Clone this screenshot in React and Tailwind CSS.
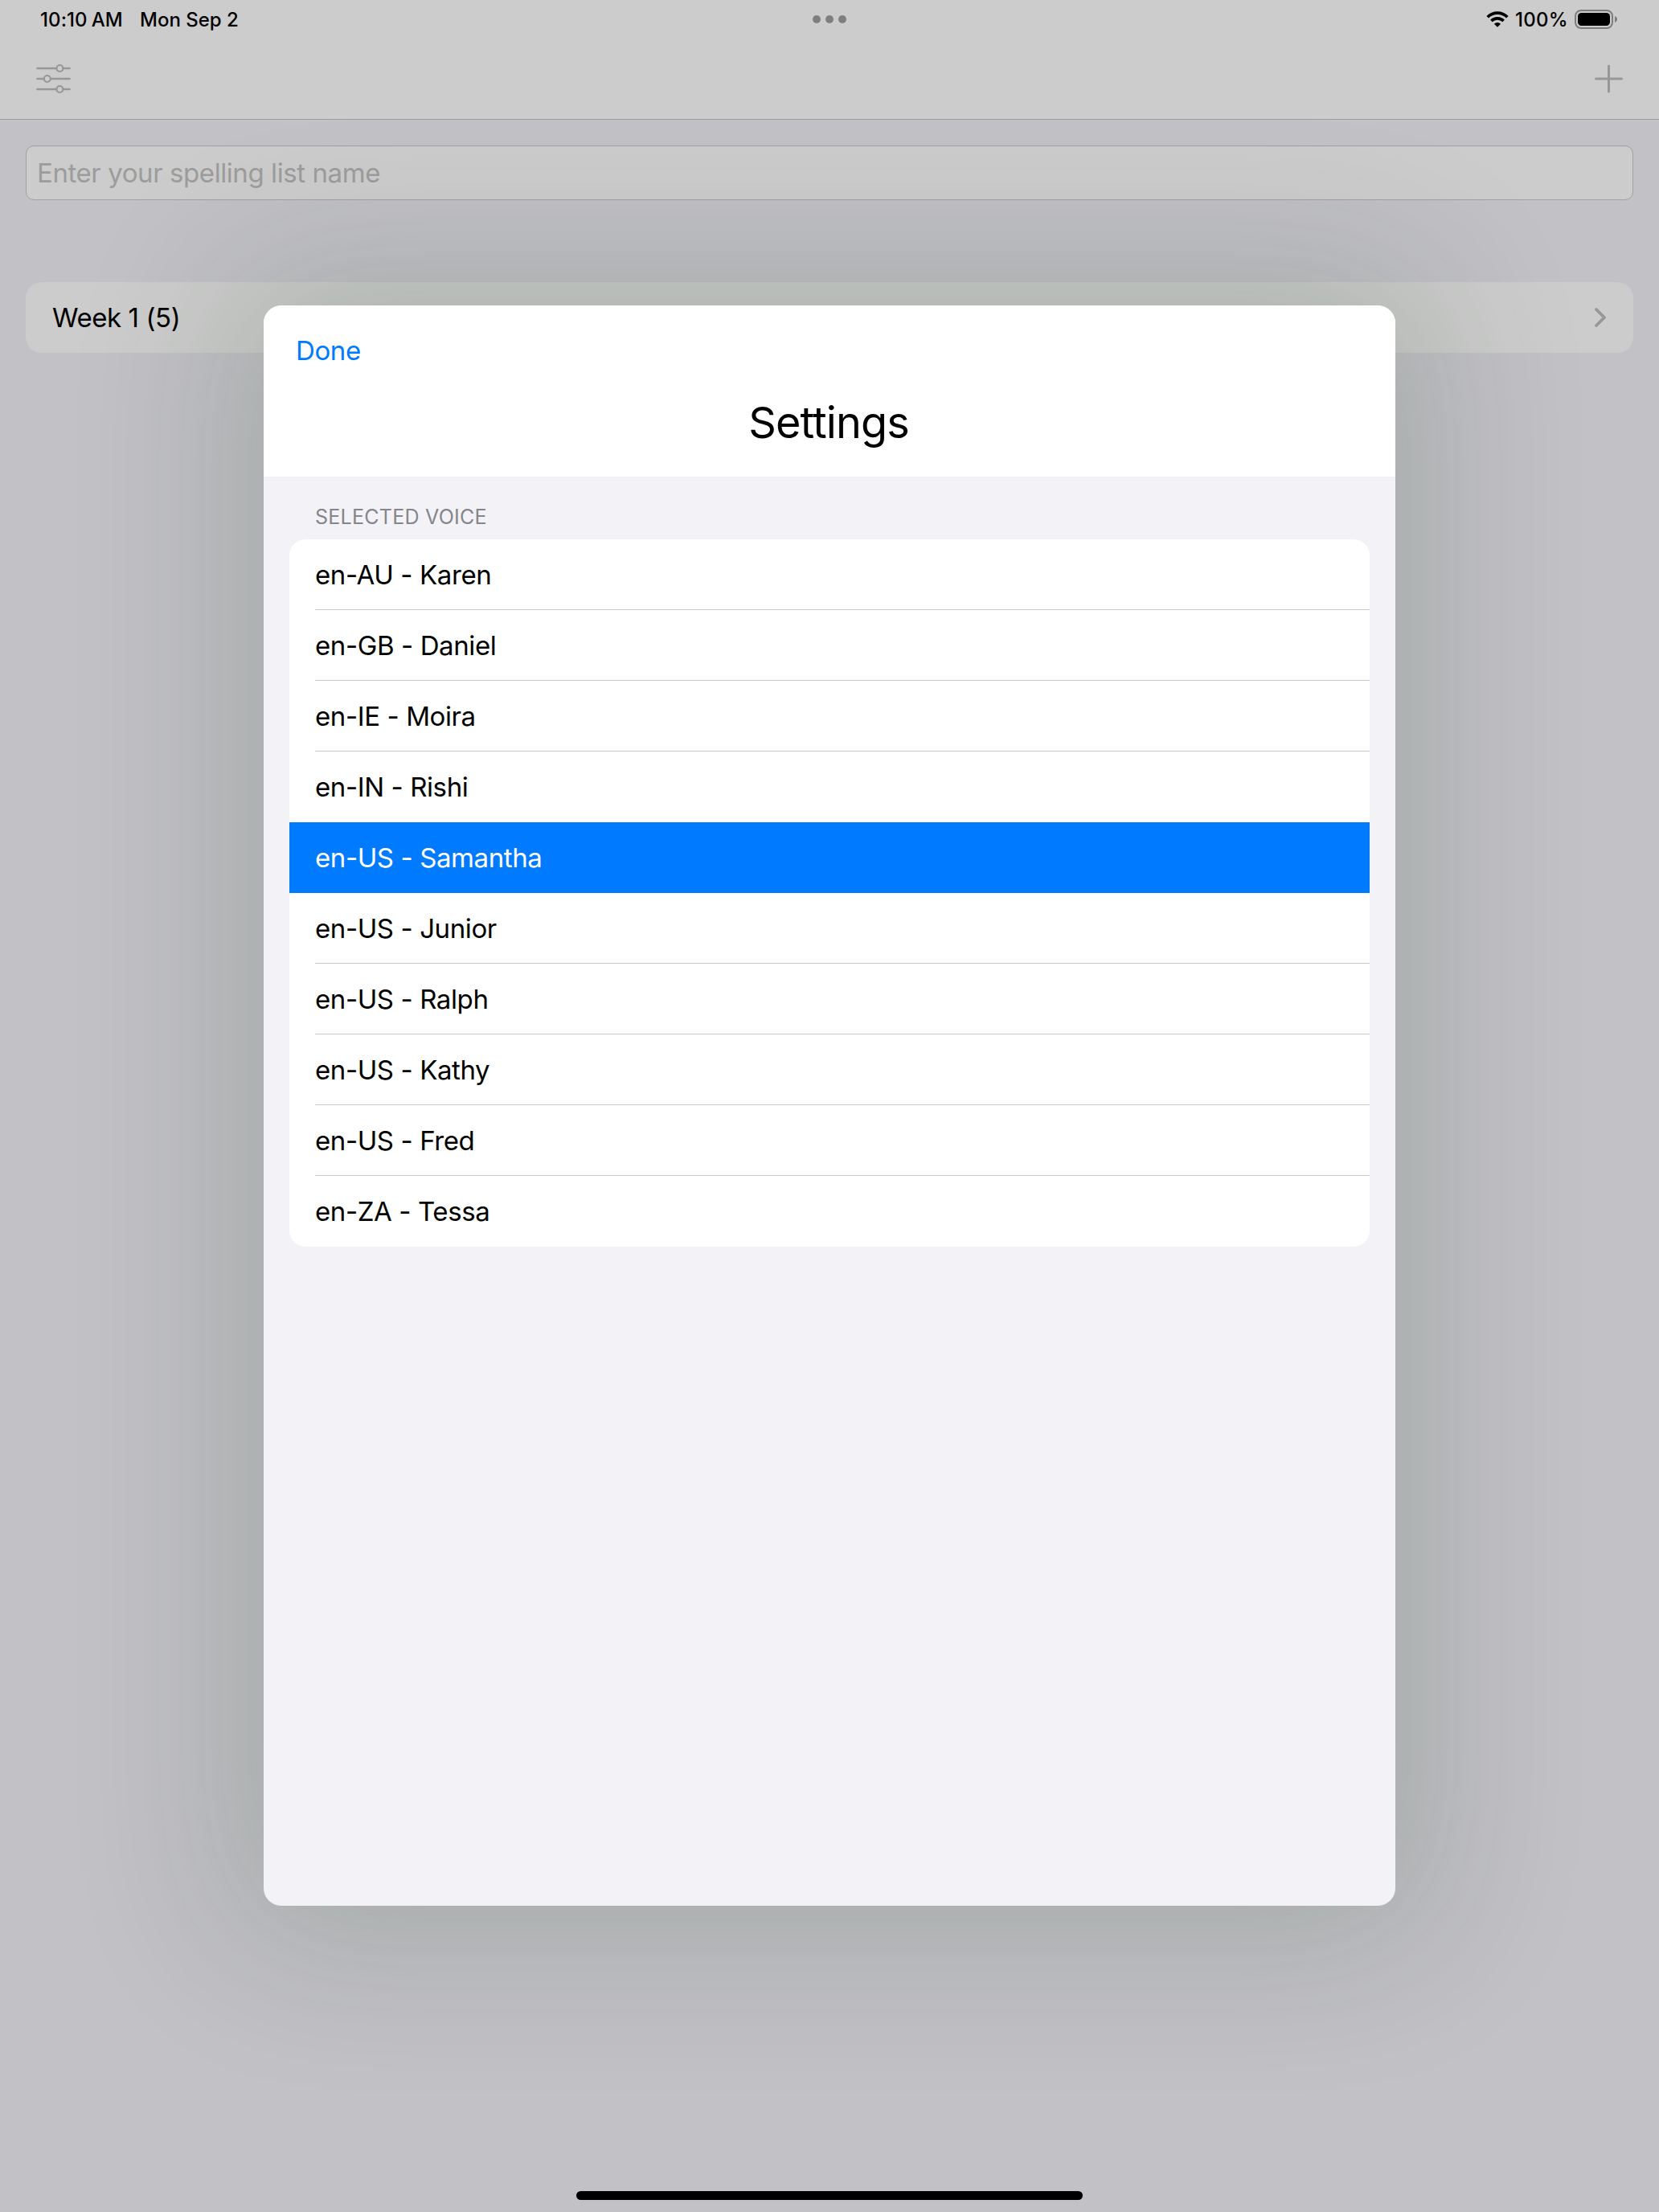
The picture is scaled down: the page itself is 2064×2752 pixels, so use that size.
const voices = [
  { name: "en-AU - Karen" },
  { name: "en-GB - Daniel" },
  { name: "en-IE - Moira" },
  { name: "en-IN - Rishi", last: true },
  { name: "en-US - Samantha", selected: true, last: true },
  { name: "en-US - Junior" },
  { name: "en-US - Ralph" },
  { name: "en-US - Kathy" },
  { name: "en-US - Fred" },
  { name: "en-ZA - Tessa", last: true },
];

function WifiIcon() {
  return (
    <svg className="block h-5 w-7" viewBox="0 0 28 20" fill="none">
      <path d="M1.7 7.2 A17.3 17.3 0 0 1 26.3 7.2" stroke="#000" strokeWidth="3.7" />
      <path d="M6.4 12.1 A10.6 10.6 0 0 1 21.6 12.1" stroke="#000" strokeWidth="3.6" />
      <path d="M14 19.8 L9.9 15.7 A5.9 5.9 0 0 1 18.1 15.7 Z" fill="#000" />
    </svg>
  );
}

function BatteryIcon() {
  return (
    <svg className="block h-6 w-[54px]" viewBox="0 0 54 24" fill="none">
      <rect x="1" y="1" width="46" height="22" rx="7" stroke="#7d7d7d" strokeWidth="2" />
      <rect x="4" y="4" width="40" height="16" rx="4.5" fill="#000" />
      <path d="M50 8 C52 8.8 53 10.2 53 12 C53 13.8 52 15.2 50 16 Z" fill="#7d7d7d" />
    </svg>
  );
}

function SlidersIcon() {
  return (
    <svg className="block h-[38px] w-11" viewBox="0 0 44 38" fill="none" stroke="#979797" strokeWidth="2.6" strokeLinecap="round">
      <path d="M1.5 6 H25 M34 6 H41.5" />
      <circle cx="29.4" cy="6" r="4" strokeWidth="2.2" />
      <path d="M1.5 19 H9.5 M18.5 19 H41.5" />
      <circle cx="13.8" cy="19" r="4" strokeWidth="2.2" />
      <path d="M1.5 32 H25 M34 32 H41.5" />
      <circle cx="29.4" cy="32" r="4" strokeWidth="2.2" />
    </svg>
  );
}

function StatusBar() {
  return (
    <div className="grid h-12 grid-cols-3 items-center pr-[51px] pl-[50px] text-[24px] font-medium text-black">
      <div className="flex items-center pt-px">
        <div className="flex w-[124px] gap-[5px] tracking-[0.1px]">
          <span>10:10</span>
          <span>AM</span>
        </div>
        <span>Mon Sep 2</span>
      </div>
      <div className="flex translate-x-px justify-center gap-1.5">
        <span className="size-2.5 rounded-full bg-[#7f7f7f]" />
        <span className="size-2.5 rounded-full bg-[#7f7f7f]" />
        <span className="size-2.5 rounded-full bg-[#7f7f7f]" />
      </div>
      <div className="flex items-center justify-end">
        <WifiIcon />
        <span className="mr-2 ml-2 w-[66px] pt-px tracking-[0.3px]">100%</span>
        <BatteryIcon />
      </div>
    </div>
  );
}

function VoiceRow({ name, selected, last }) {
  return (
    <li className={selected ? "h-[88px] bg-[#007aff] pl-8 text-white" : "h-[88px] pl-8 text-black"}>
      <div
        className={
          last
            ? "flex h-full items-center border-b border-transparent pt-[3px]"
            : "flex h-full items-center border-b border-[#c6c6c8] pt-[3px]"
        }
      >
        {name}
      </div>
    </li>
  );
}

function SettingsSheet() {
  return (
    <section className="h-[1991px] w-[1408px] rounded-[22px] shadow-[0_0_200px_40px_rgba(27,60,30,0.18)]">
      <div className="flex h-full flex-col overflow-hidden rounded-[22px] bg-[#f2f2f7]">
        <header className="h-[213px] bg-white pt-8">
          <button className="ml-10 block h-12 text-[33px] leading-[48px] tracking-[-0.4px] text-[#007aff]">Done</button>
          <h1 className="mt-[34px] pr-[2px] text-center text-[54px] leading-[64px] tracking-[-0.9px] text-black">Settings</h1>
        </header>
        <div className="px-8 pt-[30px]">
          <h2 className="pl-8 text-[25px] leading-10 tracking-[0.25px] text-[#85858a]">SELECTED VOICE</h2>
          <ul className="mt-2 overflow-hidden rounded-[20px] bg-white text-[33px] tracking-[-0.4px]">
            {voices.map((v) => (
              <VoiceRow key={v.name} {...v} />
            ))}
          </ul>
        </div>
      </div>
    </section>
  );
}

export default function App() {
  return (
    <div className="relative h-[2752px] w-[2064px] overflow-hidden bg-[#c2c1c6] font-['Inter',sans-serif]">
      <div className="h-[149px] border-b border-[#9d9da0] bg-[#cccccc]">
        <StatusBar />
        <div className="flex h-[100px] items-center justify-between pr-11 pl-[45px]">
          <SlidersIcon />
          <svg className="block size-9" viewBox="0 0 36 36" stroke="#979797" strokeWidth="3" strokeLinecap="round">
            <path d="M17.5 2 V34 M1.5 18 H33.5" />
          </svg>
        </div>
      </div>
      <main className="px-8 pt-8 text-[33px] tracking-[-0.42px]">
        <div className="flex h-[68px] items-center rounded-[10px] border border-[#a0a0a0] bg-[#cccccc] pt-[2px] pl-[13px] text-[#9c9c9c]">
          Enter your spelling list name
        </div>
        <div className="mt-[102px] flex h-[88px] items-center justify-between rounded-[20px] bg-[#cccccc] pr-[33px] pl-[33px] text-black">
          <span className="pt-[2px]">Week 1 (5)</span>
          <svg className="block h-[26px] w-4" viewBox="0 0 16 26" fill="none" stroke="#979797" strokeWidth="3.8" strokeLinecap="round" strokeLinejoin="round">
            <path d="M3 3 L13 13 L3 23" />
          </svg>
        </div>
      </main>
      <div className="absolute inset-0 flex justify-center pt-[380px]">
        <SettingsSheet />
      </div>
      <div className="absolute inset-x-0 bottom-[15px] flex justify-center">
        <div className="h-[11px] w-[630px] rounded-full bg-black" />
      </div>
    </div>
  );
}
